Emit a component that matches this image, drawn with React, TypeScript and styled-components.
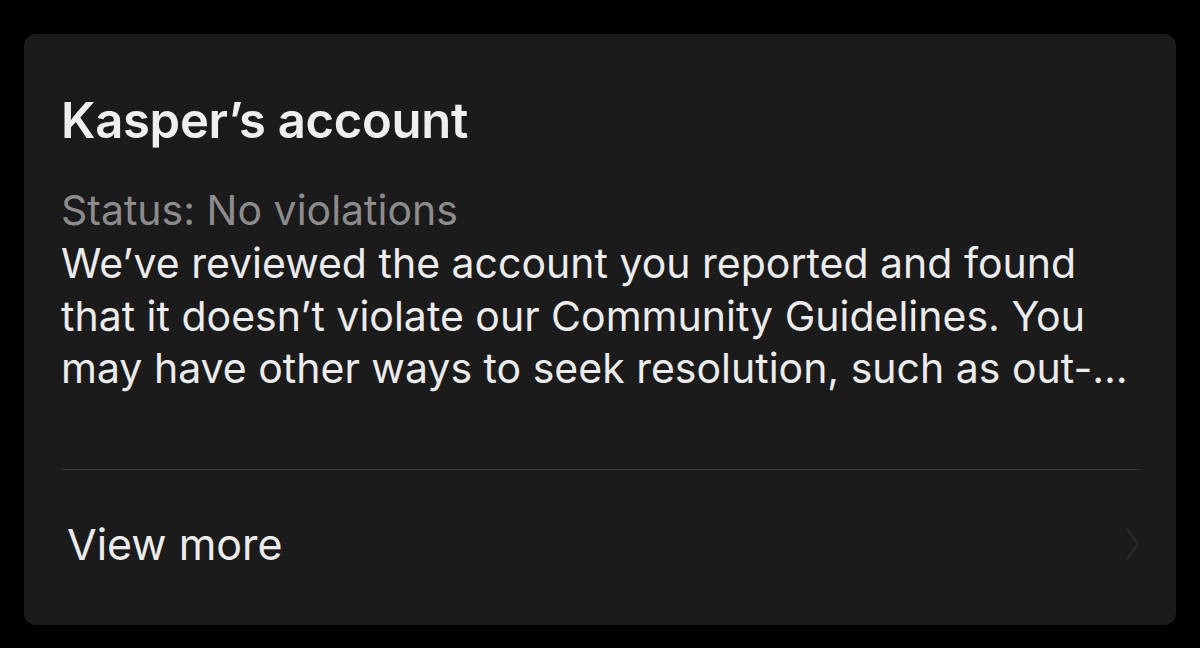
import React from "react";
import styled, { createGlobalStyle } from "styled-components";

const Global = createGlobalStyle`
  html, body { margin: 0; padding: 0; background: #000; }
  body { font-family: Inter, "Noto Sans", sans-serif; -webkit-font-smoothing: antialiased; }
`;

const Page = styled.div`
  width: 1200px;
  height: 648px;
  box-sizing: border-box;
  padding: 34px 24px 23px 24px;
  background: #000;
  display: flex;
`;

const Card = styled.div`
  flex: 1;
  background: #1b1b1b;
  border-radius: 12px;
  padding: 59px 36px 0 37px;
  display: flex;
  flex-direction: column;
`;

const Title = styled.h1`
  margin: 0;
  font-size: 49px;
  font-weight: 600;
  line-height: 56px;
  color: #efefef;
  letter-spacing: -0.3px;
`;

const Status = styled.div`
  margin-top: 35px;
  font-size: 41px;
  line-height: 53px;
  color: #8c8c8c;
`;

const Body = styled.div`
  font-size: 41px;
  line-height: 52.5px;
  color: #ececec;
`;

const Line = styled.span`
  display: block;
  white-space: nowrap;
`;

const Divider = styled.div`
  margin-top: 74px;
  height: 1px;
  background: #363636;
`;

const Row = styled.div`
  flex: 1;
  display: flex;
  align-items: center;
  justify-content: space-between;
  padding-left: 6px;
`;

const RowLabel = styled.span`
  font-size: 43px;
  line-height: 52px;
  color: #ececec;
  margin-top: -6px;
`;

const Chevron = styled.svg`
  width: 18px;
  height: 36px;
  margin-right: -2px;
  margin-top: -6px;
`;

export default function App() {
  return (
    <>
      <Global />
      <Page>
        <Card>
          <Title>Kasper’s account</Title>
          <Status>Status: No violations</Status>
          <Body>
            <Line>We’ve reviewed the account you reported and found</Line>
            <Line>that it doesn’t violate our Community Guidelines. You</Line>
            <Line>may have other ways to seek resolution, such as out-…</Line>
          </Body>
          <Divider />
          <Row>
            <RowLabel>View more</RowLabel>
            <Chevron viewBox="0 0 18 36" fill="none">
              <path d="M4 4 L14 18 L4 32" stroke="#272727" strokeWidth="3" strokeLinecap="round" strokeLinejoin="round" />
            </Chevron>
          </Row>
        </Card>
      </Page>
    </>
  );
}
